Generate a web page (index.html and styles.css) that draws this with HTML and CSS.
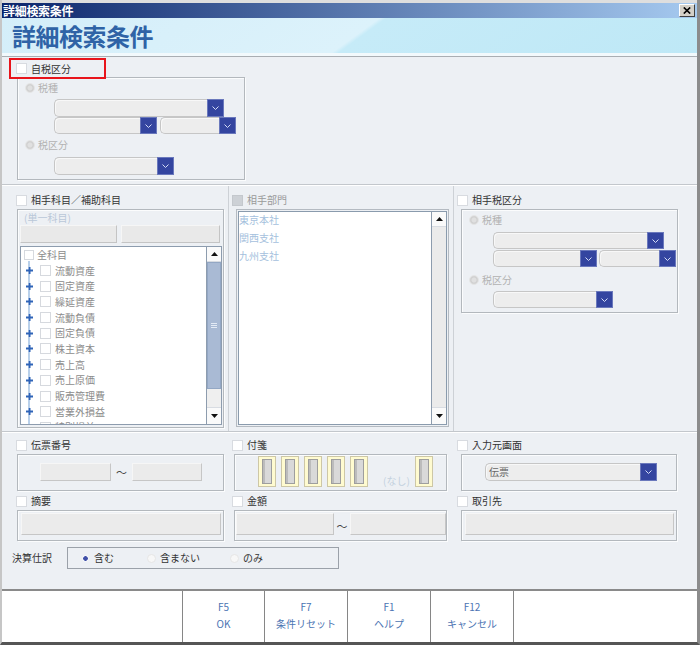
FILE: index.html
```html
<!DOCTYPE html>
<html lang="ja">
<head>
<meta charset="utf-8">
<title>詳細検索条件</title>
<link rel="stylesheet" href="styles.css">
</head>
<body>
<div class="window">
  <div class="titlebar">
    <span class="titlebar-text">詳細検索条件</span>
    <span class="close-btn"><svg width="8" height="7" viewBox="0 0 8 7"><path d="M.8.5 7.2 6.5M7.2.5.8 6.5" stroke="#000" stroke-width="1.7"/></svg></span>
  </div>
  <div class="header"><h1 class="header-title">詳細検索条件</h1></div>

  <section class="sec-own">
    <div class="highlight"><span class="cb"></span><span class="lbl">自税区分</span></div>
    <div class="group taxgroup taxgroup-own">
      <div class="radio-row r1"><span class="radio-dis"></span><span class="dis">税種</span></div>
      <div class="combo c1"><span class="combo-field"></span><span class="combo-btn"><svg width="7" height="4" viewBox="0 0 7 4"><path d="M.5.5 3.5 3.5 6.5.5" fill="none" stroke="#d4dcf6"/></svg></span></div>
      <div class="combo-pair">
        <div class="combo c2"><span class="combo-field"></span><span class="combo-btn"><svg width="7" height="4" viewBox="0 0 7 4"><path d="M.5.5 3.5 3.5 6.5.5" fill="none" stroke="#d4dcf6"/></svg></span></div>
        <div class="combo c3"><span class="combo-field"></span><span class="combo-btn"><svg width="7" height="4" viewBox="0 0 7 4"><path d="M.5.5 3.5 3.5 6.5.5" fill="none" stroke="#d4dcf6"/></svg></span></div>
      </div>
      <div class="radio-row r2"><span class="radio-dis"></span><span class="dis">税区分</span></div>
      <div class="combo c4"><span class="combo-field"></span><span class="combo-btn"><svg width="7" height="4" viewBox="0 0 7 4"><path d="M.5.5 3.5 3.5 6.5.5" fill="none" stroke="#d4dcf6"/></svg></span></div>
    </div>
  </section>

  <div class="hsep"></div>

  <section class="sec-mid">
    <div class="col col-left">
      <div class="chkrow"><span class="cb"></span><span class="lbl">相手科目／補助科目</span></div>
      <div class="group acct-group">
        <div class="single-lbl">(単一科目)</div>
        <div class="acct-btns"><span class="flat-btn b1"></span><span class="flat-btn b2"></span></div>
        <div class="acct-list">
          <div class="tree">
            <div class="tree-row root"><span class="cb-sm"></span><span>全科目</span></div>
            <div class="tree-row"><span class="plus"><svg width="7" height="7" viewBox="0 0 7 7"><path d="M2.5 0h2v2.5H7v2H4.5V7h-2V4.5H0v-2h2.5z" fill="#2f64b8"/></svg></span><span class="cb-sm"></span><span>流動資産</span></div>
            <div class="tree-row"><span class="plus"><svg width="7" height="7" viewBox="0 0 7 7"><path d="M2.5 0h2v2.5H7v2H4.5V7h-2V4.5H0v-2h2.5z" fill="#2f64b8"/></svg></span><span class="cb-sm"></span><span>固定資産</span></div>
            <div class="tree-row"><span class="plus"><svg width="7" height="7" viewBox="0 0 7 7"><path d="M2.5 0h2v2.5H7v2H4.5V7h-2V4.5H0v-2h2.5z" fill="#2f64b8"/></svg></span><span class="cb-sm"></span><span>繰延資産</span></div>
            <div class="tree-row"><span class="plus"><svg width="7" height="7" viewBox="0 0 7 7"><path d="M2.5 0h2v2.5H7v2H4.5V7h-2V4.5H0v-2h2.5z" fill="#2f64b8"/></svg></span><span class="cb-sm"></span><span>流動負債</span></div>
            <div class="tree-row"><span class="plus"><svg width="7" height="7" viewBox="0 0 7 7"><path d="M2.5 0h2v2.5H7v2H4.5V7h-2V4.5H0v-2h2.5z" fill="#2f64b8"/></svg></span><span class="cb-sm"></span><span>固定負債</span></div>
            <div class="tree-row"><span class="plus"><svg width="7" height="7" viewBox="0 0 7 7"><path d="M2.5 0h2v2.5H7v2H4.5V7h-2V4.5H0v-2h2.5z" fill="#2f64b8"/></svg></span><span class="cb-sm"></span><span>株主資本</span></div>
            <div class="tree-row"><span class="plus"><svg width="7" height="7" viewBox="0 0 7 7"><path d="M2.5 0h2v2.5H7v2H4.5V7h-2V4.5H0v-2h2.5z" fill="#2f64b8"/></svg></span><span class="cb-sm"></span><span>売上高</span></div>
            <div class="tree-row"><span class="plus"><svg width="7" height="7" viewBox="0 0 7 7"><path d="M2.5 0h2v2.5H7v2H4.5V7h-2V4.5H0v-2h2.5z" fill="#2f64b8"/></svg></span><span class="cb-sm"></span><span>売上原価</span></div>
            <div class="tree-row"><span class="plus"><svg width="7" height="7" viewBox="0 0 7 7"><path d="M2.5 0h2v2.5H7v2H4.5V7h-2V4.5H0v-2h2.5z" fill="#2f64b8"/></svg></span><span class="cb-sm"></span><span>販売管理費</span></div>
            <div class="tree-row"><span class="plus"><svg width="7" height="7" viewBox="0 0 7 7"><path d="M2.5 0h2v2.5H7v2H4.5V7h-2V4.5H0v-2h2.5z" fill="#2f64b8"/></svg></span><span class="cb-sm"></span><span>営業外損益</span></div>
            <div class="tree-row"><span class="plus"><svg width="7" height="7" viewBox="0 0 7 7"><path d="M2.5 0h2v2.5H7v2H4.5V7h-2V4.5H0v-2h2.5z" fill="#2f64b8"/></svg></span><span class="cb-sm"></span><span>特別損益</span></div>
          </div>
          <div class="vscroll">
            <span class="sb-btn"><svg width="7" height="4" viewBox="0 0 7 4"><path d="M0 4h7L3.5 0z" fill="#111"/></svg></span>
            <span class="sb-thumb"><span class="grip"></span></span>
            <span class="sb-track"></span>
            <span class="sb-btn down"><svg width="7" height="4" viewBox="0 0 7 4"><path d="M0 0h7L3.5 4z" fill="#111"/></svg></span>
          </div>
        </div>
      </div>
    </div>

    <div class="col col-dept">
      <div class="chkrow"><span class="cb cb-dis"></span><span class="lbl dis-lbl">相手部門</span></div>
      <div class="dept-list">
        <div class="dept-inner">
          <div class="dept-items">
            <div class="dept-item">東京本社</div>
            <div class="dept-item">関西支社</div>
            <div class="dept-item">九州支社</div>
          </div>
          <div class="vscroll vscroll-dept">
            <span class="sb-btn"><svg width="7" height="4" viewBox="0 0 7 4"><path d="M0 4h7L3.5 0z" fill="#111"/></svg></span>
            <span class="sb-track"></span>
            <span class="sb-btn down"><svg width="7" height="4" viewBox="0 0 7 4"><path d="M0 0h7L3.5 4z" fill="#111"/></svg></span>
          </div>
        </div>
      </div>
    </div>

    <div class="col col-right">
      <div class="chkrow"><span class="cb"></span><span class="lbl">相手税区分</span></div>
      <div class="group taxgroup taxgroup-partner">
        <div class="radio-row r1"><span class="radio-dis"></span><span class="dis">税種</span></div>
        <div class="combo c1"><span class="combo-field"></span><span class="combo-btn"><svg width="7" height="4" viewBox="0 0 7 4"><path d="M.5.5 3.5 3.5 6.5.5" fill="none" stroke="#d4dcf6"/></svg></span></div>
        <div class="combo-pair">
          <div class="combo c2"><span class="combo-field"></span><span class="combo-btn"><svg width="7" height="4" viewBox="0 0 7 4"><path d="M.5.5 3.5 3.5 6.5.5" fill="none" stroke="#d4dcf6"/></svg></span></div>
          <div class="combo c3"><span class="combo-field"></span><span class="combo-btn"><svg width="7" height="4" viewBox="0 0 7 4"><path d="M.5.5 3.5 3.5 6.5.5" fill="none" stroke="#d4dcf6"/></svg></span></div>
        </div>
        <div class="radio-row r2"><span class="radio-dis"></span><span class="dis">税区分</span></div>
        <div class="combo c4"><span class="combo-field"></span><span class="combo-btn"><svg width="7" height="4" viewBox="0 0 7 4"><path d="M.5.5 3.5 3.5 6.5.5" fill="none" stroke="#d4dcf6"/></svg></span></div>
      </div>
    </div>
  </section>

  <div class="hsep"></div>

  <section class="sec-bottom">
    <div class="cell row-a c-1">
      <div class="chkrow"><span class="cb"></span><span class="lbl">伝票番号</span></div>
      <div class="group g-slip"><span class="field f-slip1"></span><span class="tilde">～</span><span class="field f-slip2"></span></div>
    </div>
    <div class="cell row-a c-2">
      <div class="chkrow"><span class="cb"></span><span class="lbl">付箋</span></div>
      <div class="group g-tag">
        <span class="tag"><span class="tag-in"></span></span>
        <span class="tag"><span class="tag-in"></span></span>
        <span class="tag"><span class="tag-in"></span></span>
        <span class="tag"><span class="tag-in"></span></span>
        <span class="tag"><span class="tag-in"></span></span>
        <span class="nashi">(なし)</span>
        <span class="tag"><span class="tag-in"></span></span>
      </div>
    </div>
    <div class="cell row-a c-3">
      <div class="chkrow"><span class="cb"></span><span class="lbl">入力元画面</span></div>
      <div class="group g-src">
        <div class="combo c-src"><span class="combo-field">伝票</span><span class="combo-btn"><svg width="7" height="4" viewBox="0 0 7 4"><path d="M.5.5 3.5 3.5 6.5.5" fill="none" stroke="#d4dcf6"/></svg></span></div>
      </div>
    </div>

    <div class="cell row-b c-1">
      <div class="chkrow"><span class="cb"></span><span class="lbl">摘要</span></div>
      <div class="group g-memo"><span class="field f-wide"></span></div>
    </div>
    <div class="cell row-b c-2">
      <div class="chkrow"><span class="cb"></span><span class="lbl">金額</span></div>
      <div class="group g-amt"><span class="field f-amt1"></span><span class="tilde tilde-amt">～</span><span class="field f-amt2"></span></div>
    </div>
    <div class="cell row-b c-3">
      <div class="chkrow"><span class="cb"></span><span class="lbl">取引先</span></div>
      <div class="group g-client"><span class="field f-wide"></span></div>
    </div>

    <div class="cell row-c">
      <span class="lbl settle-lbl">決算仕訳</span>
      <div class="settle-box">
        <span class="opt o1"><span class="radio sel"></span><span>含む</span></span>
        <span class="opt o2"><span class="radio"></span><span>含まない</span></span>
        <span class="opt o3"><span class="radio"></span><span>のみ</span></span>
      </div>
    </div>
  </section>

  <div class="footer">
    <div class="footer-spacer"></div>
    <div class="fbtn fb1"><span>F5</span><span>OK</span></div>
    <div class="fbtn"><span>F7</span><span>条件リセット</span></div>
    <div class="fbtn"><span>F1</span><span>ヘルプ</span></div>
    <div class="fbtn fb-last"><span>F12</span><span>キャンセル</span></div>
  </div>
</div>
</body>
</html>
```

FILE: styles.css
```css
* { box-sizing: border-box; margin: 0; padding: 0; }
html, body { margin: 0; background: #fff; }
body {
  font-family: "Noto Sans CJK JP", "Noto Sans", sans-serif;
  font-size: 10px;
  line-height: 12px;
  color: #333;
}

.window {
  width: 700px;
  height: 645px;
  display: flex;
  flex-direction: column;
  border-left: 2px solid #c6c6c6;
  border-right: 3px solid #8c8c8c;
  border-bottom: 3px solid #555;
  background: #edf0f4;
  overflow: hidden;
}

/* title bar */
.titlebar {
  flex: none;
  height: 18px;
  border-top: 3px solid #dedede;
  background: linear-gradient(to right, #0a246a, #a6caf0);
  display: flex;
  align-items: center;
}
.titlebar-text {
  color: #fff;
  font-size: 12px;
  font-weight: bold;
  line-height: 15px;
  padding-left: 1px;
  letter-spacing: -0.3px;
}
.close-btn {
  margin-left: auto;
  margin-right: 2px;
  width: 16px;
  height: 13px;
  background: #d4d0c8;
  border: 1px solid;
  border-color: #fff #404040 #404040 #fff;
  display: flex;
  align-items: center;
  justify-content: center;
}

/* header band */
.header {
  flex: none;
  height: 39px;
  border-bottom: 1px solid #a9aeb3;
  background:
    linear-gradient(to bottom, transparent 35px, #f2f9fc 35px),
    linear-gradient(144deg, #d4eef9 0, #dcf2fb 222px, #c6ebf8 226px, #bee8f6 100%);
}
.header-title {
  font-size: 24px;
  font-weight: bold;
  line-height: 35px;
  color: #2f63a6;
  padding-left: 10px;
  letter-spacing: -0.5px;
}

/* common controls */
.cb {
  flex: none;
  width: 11px;
  height: 11px;
  background: #fff;
  border: 1px solid #d8dbe0;
}
.cb-dis { background: #cdd1d6; border-color: #c4c8cd; }
.cb-sm {
  flex: none;
  width: 10px;
  height: 10px;
  background: #fff;
  border: 1px solid #d6d9de;
}
.lbl { color: #333; white-space: nowrap; }
.dis-lbl { color: #9a9a9a; }
.dis { color: #b2b2b2; }

.group {
  border: 1px solid #b3b8bd;
  box-shadow: inset 1px 1px 0 #fbfcfd, 1px 1px 0 #fbfcfd;
}

.radio-dis {
  flex: none;
  width: 10px;
  height: 10px;
  border-radius: 50%;
  border: 1px solid #e4e4e4;
  background: radial-gradient(circle, #e0e0e0 0 2px, #d0d0d0 3px, #dadada 5px);
}
.radio-row {
  display: flex;
  align-items: center;
  gap: 3px;
  padding-left: 7px;
}

.combo {
  display: flex;
  height: 18px;
  background: #ededed;
  border: 1px solid #c6c6c6;
  border-right: none;
  border-radius: 5px 0 0 5px;
  box-shadow: inset 1px 1px 0 #f8f8f8;
}
.combo-field {
  flex: 1;
  color: #666;
  line-height: 16px;
  padding-left: 3px;
}
.combo-btn {
  flex: none;
  width: 17px;
  margin: -1px 0;
  background: #3445a0;
  border: 1px solid #6a78bc;
  display: flex;
  align-items: center;
  justify-content: center;
}
.combo-pair { display: flex; }

/* section: own tax */
.sec-own {
  flex: none;
  height: 127px;
  padding-top: 1px;
}
.highlight {
  position: relative;
  z-index: 1;
  margin-left: 7px;
  width: 97px;
  height: 21px;
  border: 2px solid #e8141b;
  display: flex;
  align-items: center;
  padding-left: 5px;
  gap: 4px;
}
.taxgroup-own {
  margin: -2px 0 0 15px;
  width: 228px;
  height: 103px;
}
.taxgroup-own .r1 { height: 20px; }
.taxgroup-own .combo { margin-left: 36px; }
.taxgroup-own .c1 { width: 170px; margin-top: 1px; }
.taxgroup-own .combo-pair { margin-left: 36px; gap: 3px; }
.taxgroup-own .combo-pair .combo { margin-left: 0; height: 17px; }
.taxgroup-own .c2 { width: 103px; }
.taxgroup-own .c3 { width: 76px; }
.taxgroup-own .r2 { height: 22px; }
.taxgroup-own .c4 { width: 120px; margin-top: 1px; }

.hsep {
  flex: none;
  height: 2px;
  border-top: 1px solid #c3c7cc;
  background: #fff;
}

/* section: middle three columns */
.sec-mid {
  flex: none;
  height: 245px;
  display: flex;
}
.col { flex: none; }
.col-left { width: 226px; }
.col-dept { width: 225px; border-left: 1px solid #cdd1d6; }
.col-right { flex: 1; border-left: 1px solid #cdd1d6; }

.chkrow {
  display: flex;
  align-items: center;
  gap: 4px;
  height: 12px;
}
.sec-mid .chkrow { margin-top: 8px; }
.col-left .chkrow { margin-left: 14px; }
.col-dept .chkrow, .col-right .chkrow { margin-left: 3px; }

.acct-group {
  margin: 3px 0 0 15px;
  width: 207px;
  height: 219px;
}
.single-lbl {
  height: 15px;
  line-height: 15px;
  color: #b9c7d8;
  padding-left: 6px;
}
.acct-btns {
  display: flex;
  gap: 4px;
  margin-left: 2px;
  height: 18px;
}
.flat-btn {
  height: 18px;
  background: #e9e9e9;
  border: 1px solid;
  border-color: #f6f6f6 #c4c4c4 #c4c4c4 #f6f6f6;
}
.b1 { width: 97px; }
.b2 { width: 99px; }

.acct-list {
  margin: 3px 0 0 2px;
  width: 202px;
  height: 179px;
  border: 1px solid #8d9cae;
  background: #fff;
  display: flex;
  overflow: hidden;
}
.tree {
  flex: 1;
  overflow: hidden;
  color: #8c8c8c;
  background: linear-gradient(#b9d0ea, #b9d0ea) no-repeat 7px 14px / 2px 100%;
}
.tree-row {
  height: 15.7px;
  display: flex;
  align-items: center;
  white-space: nowrap;
  padding-left: 5px;
}
.tree-row.root { padding-left: 3px; gap: 3px; }
.plus {
  flex: none;
  width: 7px;
  height: 7px;
  margin-right: 7px;
  display: flex;
  background: #fff;
}
.tree-row:not(.root) .cb-sm { margin-right: 4px; width: 11px; height: 11px; }

.vscroll {
  flex: none;
  width: 15px;
  border-left: 1px solid #8d9cae;
  display: flex;
  flex-direction: column;
  background: #efefef;
}
.sb-btn {
  flex: none;
  height: 15px;
  background: #fafafa;
  border-bottom: 1px solid #d8dce2;
  display: flex;
  align-items: center;
  justify-content: center;
}
.sb-btn.down { border-bottom: none; border-top: 1px solid #d8dce2; height: 17px; }
.sb-thumb {
  flex: none;
  height: 127px;
  background: #a9bad4;
  border: 1px solid #93a7c4;
  display: flex;
  align-items: center;
  justify-content: center;
}
.grip {
  width: 6px;
  height: 5px;
  background: repeating-linear-gradient(#e4ebf5 0 1px, transparent 1px 2px);
}
.sb-track { flex: 1; }

.dept-list {
  margin: 3px 0 0 7px;
  width: 213px;
  height: 218px;
  border: 1px solid #b4bac1;
  padding: 1px;
}
.dept-inner {
  height: 100%;
  border: 1px solid #8a9bad;
  background: #fff;
  display: flex;
}
.dept-items { flex: 1; margin-top: -1px; }
.dept-item { height: 18px; line-height: 18px; color: #a5bfdd; }
.vscroll-dept { width: 15px; background: #ebebeb; }

.taxgroup-partner {
  margin: 3px 0 0 7px;
  width: 217px;
  height: 104px;
}
.taxgroup-partner .r1 { height: 19px; }
.taxgroup-partner .combo { margin-left: 31px; height: 17px; }
.taxgroup-partner .c1 { width: 171px; margin-top: 3px; }
.taxgroup-partner .combo-pair { margin: 1px 0 0 31px; gap: 2px; }
.taxgroup-partner .combo-pair .combo { margin-left: 0; }
.taxgroup-partner .c2 { width: 104px; }
.taxgroup-partner .c3 { width: 77px; }
.taxgroup-partner .r2 { height: 20px; margin-top: 3px; }
.taxgroup-partner .c4 { width: 120px; margin-top: 1px; }

/* section: bottom */
.sec-bottom {
  flex: none;
  height: 156px;
  display: grid;
  grid-template-columns: 226px 225px 1fr;
  grid-template-rows: auto auto 1fr;
}
.row-a { padding-top: 6px; }
.row-b { padding-top: 4px; }
.c-1 .chkrow { margin-left: 14px; }
.c-2 .chkrow, .c-3 .chkrow { margin-left: 4px; }
.cell .group { margin-top: 3px; }
.row-a .group { height: 37px; }
.row-b .group { height: 31px; }
.c-1 .group { margin-left: 15px; width: 207px; }
.c-2 .group { margin-left: 6px; width: 213px; }
.c-3 .group { margin-left: 8px; width: 216px; }

.field {
  flex: none;
  height: 18px;
  background: #ebebeb;
  border: 1px solid;
  border-color: #f6f6f6 #c6c6c6 #c6c6c6 #f6f6f6;
}
.g-slip {
  display: flex;
  align-items: flex-start;
  padding: 8px 0 0 22px;
}
.f-slip1 { width: 71px; }
.f-slip2 { width: 70px; }
.tilde {
  flex: none;
  width: 21px;
  text-align: center;
  font-size: 11px;
  line-height: 19px;
  color: #444;
}

.g-tag {
  display: flex;
  align-items: flex-start;
  gap: 5px;
  padding: 1px 0 0 23px;
}
.tag {
  flex: none;
  width: 18px;
  height: 31px;
  background: #fffbd0;
  border: 1px solid #cdc7a6;
  padding: 2px 3px;
  display: flex;
}
.tag-in {
  flex: 1;
  border: 1px solid #9e9e9e;
  background: linear-gradient(to right, #bcbcbc 0 2px, #d9d9d9 2px);
}
.nashi {
  align-self: flex-end;
  margin: 0 -2px 3px 10px;
  width: 29px;
  color: #c3d0de;
}

.g-src { padding: 8px 0 0 23px; }
.c-src { width: 172px; }

.g-memo, .g-client { display: flex; padding: 2px 2px 0 3px; }
.f-wide { flex: 1; height: 22px; }
.g-amt { display: flex; padding: 2px 0 0 1px; }
.f-amt1 { width: 98px; height: 22px; }
.f-amt2 { flex: 1; height: 22px; }
.tilde-amt { width: 16px; line-height: 26px; }

.row-c {
  grid-column: 1 / -1;
  display: flex;
  align-items: center;
  align-self: start;
  padding: 6px 0 0 10px;
}
.settle-lbl { width: 55px; }
.settle-box {
  width: 272px;
  height: 22px;
  border: 1px solid #9ba1a9;
  display: flex;
  align-items: center;
  padding-left: 13px;
}
.opt { display: flex; align-items: center; gap: 4px; }
.o1 { width: 66px; }
.o2 { width: 83px; }
.radio {
  flex: none;
  width: 9px;
  height: 9px;
  border-radius: 50%;
  background: #f7f7f7;
  border: 1px solid #e6e6e6;
  display: flex;
  align-items: center;
  justify-content: center;
}
.radio.sel { background: radial-gradient(circle, #4050a8 0 2px, #f4f6fa 2.6px); border-color: #eef0f4; }

/* footer */
.footer {
  flex: none;
  height: 53px;
  border-top: 2px solid #8a8a8a;
  background: #fff;
  display: flex;
}
.footer-spacer { flex: none; width: 180px; }
.fbtn {
  flex: none;
  width: 83px;
  border-left: 1px solid #868686;
  display: flex;
  flex-direction: column;
  align-items: center;
  padding-top: 7px;
  color: #4b74b3;
  line-height: 17px;
}
.fb1 { width: 82px; }
.fb-last { width: 84px; border-right: 1px solid #868686; }
```
